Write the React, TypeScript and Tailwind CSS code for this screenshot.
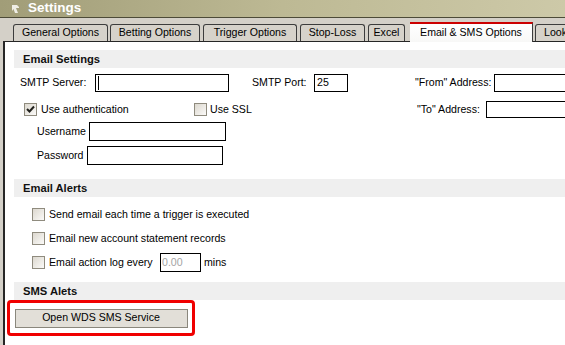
import React from "react";

const font = { fontFamily: '"Liberation Sans", Arial, sans-serif' };

const CheckBox = ({ checked = false }: { checked?: boolean }) => (
  <span className="flex h-[13px] w-[13px] shrink-0 items-center justify-center border border-[#8f8b7e] bg-gradient-to-br from-[#dcd8cf] to-[#fbfaf8]">
    {checked && (
      <svg width="9" height="9" viewBox="0 0 9 9">
        <path d="M1 4 L3.5 6.5 L8 1.5" fill="none" stroke="#21211d" strokeWidth="2" />
      </svg>
    )}
  </span>
);

const Field = ({ w, h = "h-[18px]", value, cursor }: { w: string; h?: string; value?: string; cursor?: boolean }) => (
  <div className={`${w} ${h} flex shrink-0 items-center border border-black bg-white pl-[2px]`}>
    {cursor && <span className="h-[14px] w-px bg-black" />}
    {value}
  </div>
);

const SectionHeader = ({ title }: { title: string }) => (
  <div className="flex h-[18px] shrink-0 items-center bg-[#efefef] pl-[9px] text-[11.2px] font-bold text-[#111]">
    {title}
  </div>
);

const tabs = [
  { label: "General Options", cls: "w-[95px]" },
  { label: "Betting Options", cls: "ml-[2px] w-[90px]" },
  { label: "Trigger Options", cls: "ml-[3px] w-[94px]" },
  { label: "Stop-Loss", cls: "ml-[3px] w-[65px]" },
  { label: "Excel", cls: "ml-[3px] w-[37px]" },
];

export default function App() {
  return (
    <div style={font} className="flex h-[345px] w-[565px] flex-col overflow-hidden whitespace-nowrap bg-[#d4d0c8] text-[10.6px] text-black">
      {/* title bar */}
      <div className="flex h-[18px] shrink-0 items-center gap-[9px] border-b border-[#4d4b38] bg-gradient-to-r from-[#a19d78] via-[#bdb994] to-[#cdc9a8] pl-[12px]">
        <svg width="7" height="8" viewBox="0 0 7 8">
          <path d="M0 0 H5 L7 2 V3 L4 3 L6 8 H3 L1.5 4 L0 6 Z" fill="#efeee6" />
        </svg>
        <span className="text-[13.5px] font-bold text-white">Settings</span>
      </div>

      {/* tabs */}
      <div className="flex h-[23px] shrink-0 items-end pl-[13px]">
        {tabs.map((t) => (
          <div
            key={t.label}
            className={`${t.cls} flex h-[17px] shrink-0 items-center justify-center rounded-t-[3px] border border-b-0 border-[#3c3c3c] bg-[#d6d2ca]`}
          >
            {t.label}
          </div>
        ))}
        <div className="relative z-10 -mb-px ml-[5px] flex h-[20px] w-[123px] shrink-0 items-center justify-center border-t-2 border-r border-[#cc0000] border-r-[#3c3c3c] bg-gradient-to-b from-white to-[#f8f8f7]">
          Email &amp; SMS Options
        </div>
        <div className="ml-[2px] flex h-[17px] w-[40px] shrink-0 items-center rounded-t-[3px] border border-b-0 border-[#3c3c3c] bg-[#d6d2ca] pl-[8px]">
          Look
        </div>
      </div>

      {/* content */}
      <div className="ml-[3px] flex flex-1 flex-col border-l-2 border-t border-[#262626] bg-white pl-[9px] pt-[8px]">
        <SectionHeader title="Email Settings" />

        <div className="mt-[6px] flex h-[18px] shrink-0 items-center">
          <span className="ml-[6px] w-[75px] shrink-0">SMTP Server:</span>
          <Field w="w-[134px]" cursor />
          <span className="ml-[23px] w-[62px] shrink-0">SMTP Port:</span>
          <Field w="w-[34px]" value="25" />
          <span className="ml-[67px] w-[79px] shrink-0">"From" Address:</span>
          <Field w="w-[90px]" />
        </div>

        <div className="mt-[9px] flex h-[17px] shrink-0 items-center">
          <span className="ml-[10px]">
            <CheckBox checked />
          </span>
          <span className="ml-[4px] w-[153px] shrink-0">Use authentication</span>
          <CheckBox />
          <span className="ml-[3px] w-[207px] shrink-0">Use SSL</span>
          <span className="w-[69px] shrink-0">"To" Address:</span>
          <Field w="w-[90px]" h="h-[17px]" />
        </div>

        <div className="mt-[4px] flex h-[19px] shrink-0 items-center">
          <span className="ml-[23px] w-[52px] shrink-0">Username</span>
          <Field w="w-[137px]" h="h-[19px]" />
        </div>
        <div className="mt-[5px] flex h-[19px] shrink-0 items-center">
          <span className="ml-[23px] w-[50px] shrink-0">Password</span>
          <Field w="w-[136px]" h="h-[19px]" />
        </div>

        <div className="mt-[14px]">
          <SectionHeader title="Email Alerts" />
        </div>

        <div className="flex flex-col pl-[18px]">
          <div className="mt-[11px] flex h-[13px] items-center gap-[4px]">
            <CheckBox />
            <span>Send email each time a trigger is executed</span>
          </div>
          <div className="mt-[11px] flex h-[13px] items-center gap-[4px]">
            <CheckBox />
            <span>Email new account statement records</span>
          </div>
          <div className="mt-[8px] flex h-[19px] items-center">
            <CheckBox />
            <span className="ml-[4px] w-[111px] shrink-0">Email action log every</span>
            <div className="flex h-[19px] w-[41px] shrink-0 items-center border border-black bg-white pl-[1px] text-[#a5a5a5]">
              0.00
            </div>
            <span className="ml-[3px]">mins</span>
          </div>
        </div>

        <div className="mt-[10px]">
          <SectionHeader title="SMS Alets" />
        </div>

        <div className="-ml-[7px] flex h-[36px] w-[188px] shrink-0 items-center justify-center rounded-[4px] border-[3px] border-[#f00000]">
          <div className="flex h-[19px] w-[173px] items-center justify-center border border-[#8a877c] bg-[#e2dfd8]">
            Open WDS SMS Service
          </div>
        </div>
      </div>
    </div>
  );
}
